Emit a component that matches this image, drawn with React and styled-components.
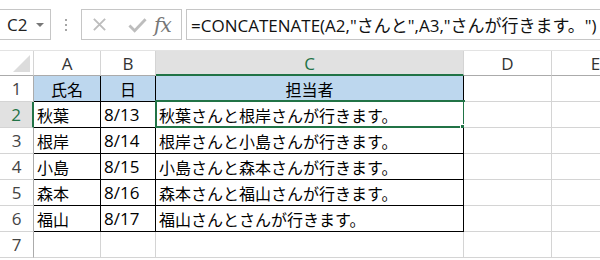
import React from "react";
import styled, { createGlobalStyle, css } from "styled-components";

const GREEN = "#217346";
const GRID = "#d4d4d4";

const GlobalStyle = createGlobalStyle`
  html, body {
    margin: 0;
    background: #fff;
  }
  body {
    font-family: "Open Sans", "Noto Sans CJK JP", sans-serif;
    color: #000;
  }
`;

const Page = styled.div`
  width: 600px;
  height: 260px;
  overflow: hidden;
  background: #fff;
`;

/* formula bar */
const Toolbar = styled.div`
  display: flex;
  align-items: stretch;
  height: 31px;
  margin-top: 9px;
  margin-left: -1px;
`;

const NameBox = styled.div`
  display: flex;
  align-items: center;
  justify-content: space-between;
  box-sizing: border-box;
  width: 52px;
  padding: 0 6px 0 7px;
  border: 1px solid #c6c6c6;
  font-size: 17px;
  color: #222;
`;

const Caret = styled.span`
  width: 0;
  height: 0;
  border-left: 4px solid transparent;
  border-right: 4px solid transparent;
  border-top: 4px solid #777;
  margin-top: 1px;
`;

const Grip = styled.div`
  width: 30px;
  display: flex;
  flex-direction: column;
  align-items: center;
  justify-content: center;
  gap: 3px;

  & span {
    width: 2px;
    height: 2px;
    background: #a6a6a6;
  }
`;

const FxBox = styled.div`
  display: flex;
  align-items: center;
  box-sizing: border-box;
  width: 101px;
  padding: 0 0 0 10px;
  border: 1px solid #c6c6c6;
`;

const FxLabel = styled.span`
  font-family: "DejaVu Serif", "Liberation Serif", serif;
  font-style: italic;
  font-size: 20px;
  color: #777;
  margin-left: 7px;
  letter-spacing: -1px;
`;

const FormulaInput = styled.div`
  flex: 1;
  display: flex;
  align-items: center;
  box-sizing: border-box;
  margin-left: 4px;
  padding-left: 4px;
  border: 1px solid #c6c6c6;
  border-right: none;
  font-size: 17px;
  white-space: nowrap;
  overflow: hidden;
  color: #111;
`;

/* worksheet grid */
const Sheet = styled.div`
  display: grid;
  grid-template-columns: 34px 67px 55px 308px 88px 88px;
  grid-template-rows: 25px repeat(7, 26px);
  margin-top: 10px;
  border-top: 1px solid #e3e3e3;
`;

const Corner = styled.div`
  position: relative;
  box-sizing: border-box;
  border-right: 1px solid ${GRID};
  border-bottom: 1px solid #ababab;

  &::after {
    content: "";
    position: absolute;
    right: 3px;
    bottom: 3px;
    width: 0;
    height: 0;
    border-left: 17px solid transparent;
    border-bottom: 17px solid #dcdcdc;
  }
`;

const ColHead = styled.div`
  box-sizing: border-box;
  display: flex;
  align-items: center;
  justify-content: center;
  font-size: 17px;
  color: #333;
  border-right: 1px solid ${GRID};
  border-bottom: 1px solid #ababab;

  ${(p) =>
    p.$active &&
    css`
      background: #e1e1e1;
      color: ${GREEN};
      border-bottom: 2px solid ${GREEN};
      padding-top: 1px;
    `}
`;

const RowHead = styled.div`
  box-sizing: border-box;
  display: flex;
  align-items: center;
  justify-content: center;
  font-size: 17px;
  color: #444;
  border-right: 1px solid #ababab;
  border-bottom: 1px solid ${GRID};

  ${(p) =>
    p.$active &&
    css`
      background: #e1e1e1;
      color: ${GREEN};
      border-right: 2px solid ${GREEN};
    `}
`;

const Cell = styled.div`
  position: relative;
  box-sizing: border-box;
  display: flex;
  align-items: center;
  justify-content: ${(p) => (p.$center ? "center" : "flex-start")};
  padding: 0 3px;
  font-size: ${(p) => (p.$num ? "17px" : "16px")};
  white-space: nowrap;
  background: ${(p) => (p.$fill ? "#bdd7ee" : "#fff")};
  border-right: 1px solid ${(p) => (p.$boxed ? "#000" : GRID)};
  border-bottom: 1px solid ${(p) => (p.$boxed ? "#000" : GRID)};

  ${(p) =>
    p.$selected &&
    css`
      &::before {
        content: "";
        position: absolute;
        inset: -2px -2px -1px -1px;
        border: 2px solid ${GREEN};
        pointer-events: none;
      }
      &::after {
        content: "";
        position: absolute;
        right: -4px;
        bottom: -4px;
        width: 5px;
        height: 5px;
        background: ${GREEN};
        border: 1px solid #fff;
      }
    `}
`;

const columns = ["A", "B", "C", "D", "E"];

const people = [
  { name: "秋葉", date: "8/13", text: "秋葉さんと根岸さんが行きます。" },
  { name: "根岸", date: "8/14", text: "根岸さんと小島さんが行きます。" },
  { name: "小島", date: "8/15", text: "小島さんと森本さんが行きます。" },
  { name: "森本", date: "8/16", text: "森本さんと福山さんが行きます。" },
  { name: "福山", date: "8/17", text: "福山さんとさんが行きます。" },
];

const CrossIcon = () => (
  <svg width="15" height="15" viewBox="0 0 16 16">
    <path d="M2 2 L14 14 M14 2 L2 14" stroke="#bdbdbd" strokeWidth="2" fill="none" />
  </svg>
);

const CheckIcon = () => (
  <svg width="19" height="16" viewBox="0 0 20 16" style={{ marginLeft: 21 }}>
    <path d="M1.5 8.5 L7 14 L18.5 2" stroke="#bdbdbd" strokeWidth="3" fill="none" />
  </svg>
);

export default function App() {
  return (
    <Page>
      <GlobalStyle />
      <Toolbar>
        <NameBox>
          C2
          <Caret />
        </NameBox>
        <Grip>
          <span />
          <span />
          <span />
        </Grip>
        <FxBox>
          <CrossIcon />
          <CheckIcon />
          <FxLabel>fx</FxLabel>
        </FxBox>
        <FormulaInput>=CONCATENATE(A2,"さんと",A3,"さんが行きます。")</FormulaInput>
      </Toolbar>

      <Sheet>
        <Corner />
        {columns.map((c) => (
          <ColHead key={c} $active={c === "C"}>
            {c}
          </ColHead>
        ))}

        <RowHead>1</RowHead>
        <Cell $boxed $fill $center>氏名</Cell>
        <Cell $boxed $fill $center>日</Cell>
        <Cell $boxed $fill $center>担当者</Cell>
        <Cell />
        <Cell />

        {people.map((p, i) => (
          <React.Fragment key={p.name}>
            <RowHead $active={i === 0}>{i + 2}</RowHead>
            <Cell $boxed>{p.name}</Cell>
            <Cell $boxed $num>{p.date}</Cell>
            <Cell $boxed $selected={i === 0}>{p.text}</Cell>
            <Cell />
            <Cell />
          </React.Fragment>
        ))}

        <RowHead>7</RowHead>
        <Cell />
        <Cell />
        <Cell />
        <Cell />
        <Cell />
      </Sheet>
    </Page>
  );
}
